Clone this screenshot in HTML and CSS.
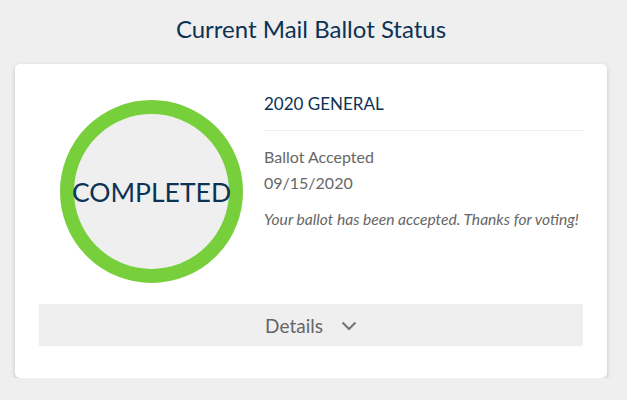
FILE: index.html
```html
<!DOCTYPE html>
<html lang="en">

<head>
    <meta charset="UTF-8">
    <meta name="viewport" content="width=device-width, initial-scale=1.0">
    <title>Mail Ballot Status</title>
    <link rel="stylesheet" href="styles.css">
</head>

<body>
    <h1 class="page-title">Current Mail Ballot Status</h1>

    <div class="card">
        <div class="card-top">
            <div class="status-col">
                <div class="status-ring">
                    <span class="status-label">COMPLETED</span>
                </div>
            </div>
            <div class="info-col">
                <h2 class="election">2020 GENERAL</h2>
                <p class="info-line">Ballot Accepted</p>
                <p class="info-line">09/15/2020</p>
                <p class="info-note">Your ballot has been accepted. Thanks for voting!</p>
            </div>
        </div>

        <div class="details-bar">
            <span>Details</span>
            <svg class="chevron" width="16" height="10" viewBox="0 0 16 10">
                <path d="M1.5 1.5 L8 8 L14.5 1.5" fill="none" stroke="#777" stroke-width="2.2" />
            </svg>
        </div>
    </div>
</body>
</html>
```

FILE: styles.css
```css
:root {
    --background: #efefef;
    --navy: #0c3354;
    --grey: #666666;
    --green: #77cf3b;
}

body {
    margin: 0;
    padding: 0 20px 0 15px;
    background-color: var(--background);
    font-family: Lato, "Open Sans", Arial, sans-serif;
}

.page-title {
    margin: 0;
    padding-top: 14px;
    height: 64px;
    box-sizing: border-box;
    text-align: center;
    font-size: 24px;
    font-weight: normal;
    line-height: 30px;
    color: var(--navy);
}

.card {
    background: white;
    border-radius: 5px;
    box-shadow: 0 2px 5px rgba(0, 0, 0, 0.18);
    padding: 12px 24px 32px 24px;
}

.card-top {
    display: flex;
}

.status-col {
    width: 225px;
    display: flex;
    justify-content: center;
    padding-top: 24px;
}

.status-ring {
    width: 155px;
    height: 155px;
    border: 14px solid var(--green);
    border-radius: 50%;
    background: var(--background);
    display: flex;
    align-items: center;
    justify-content: center;
}

.status-label {
    font-size: 26.5px;
    color: var(--navy);
}

.info-col {
    flex: 1;
    padding-top: 16px;
}

.election {
    margin: 0 0 0 0;
    font-size: 17px;
    font-weight: normal;
    line-height: 24px;
    color: var(--navy);
    padding-bottom: 14px;
    border-bottom: 1px solid #eeeeee;
    margin-bottom: 13px;
}

.info-line {
    margin: 0;
    font-size: 16px;
    line-height: 26px;
    color: var(--grey);
}

.info-note {
    margin: 12px 0 0 0;
    font-size: 15.6px;
    font-style: italic;
    line-height: 22px;
    color: var(--grey);
}

.details-bar {
    margin-top: 21px;
    height: 42px;
    background: var(--background);
    display: flex;
    align-items: center;
    justify-content: center;
    gap: 18px;
    font-size: 19px;
    color: var(--grey);
}

.chevron {
    margin-top: 2px;
}
```
